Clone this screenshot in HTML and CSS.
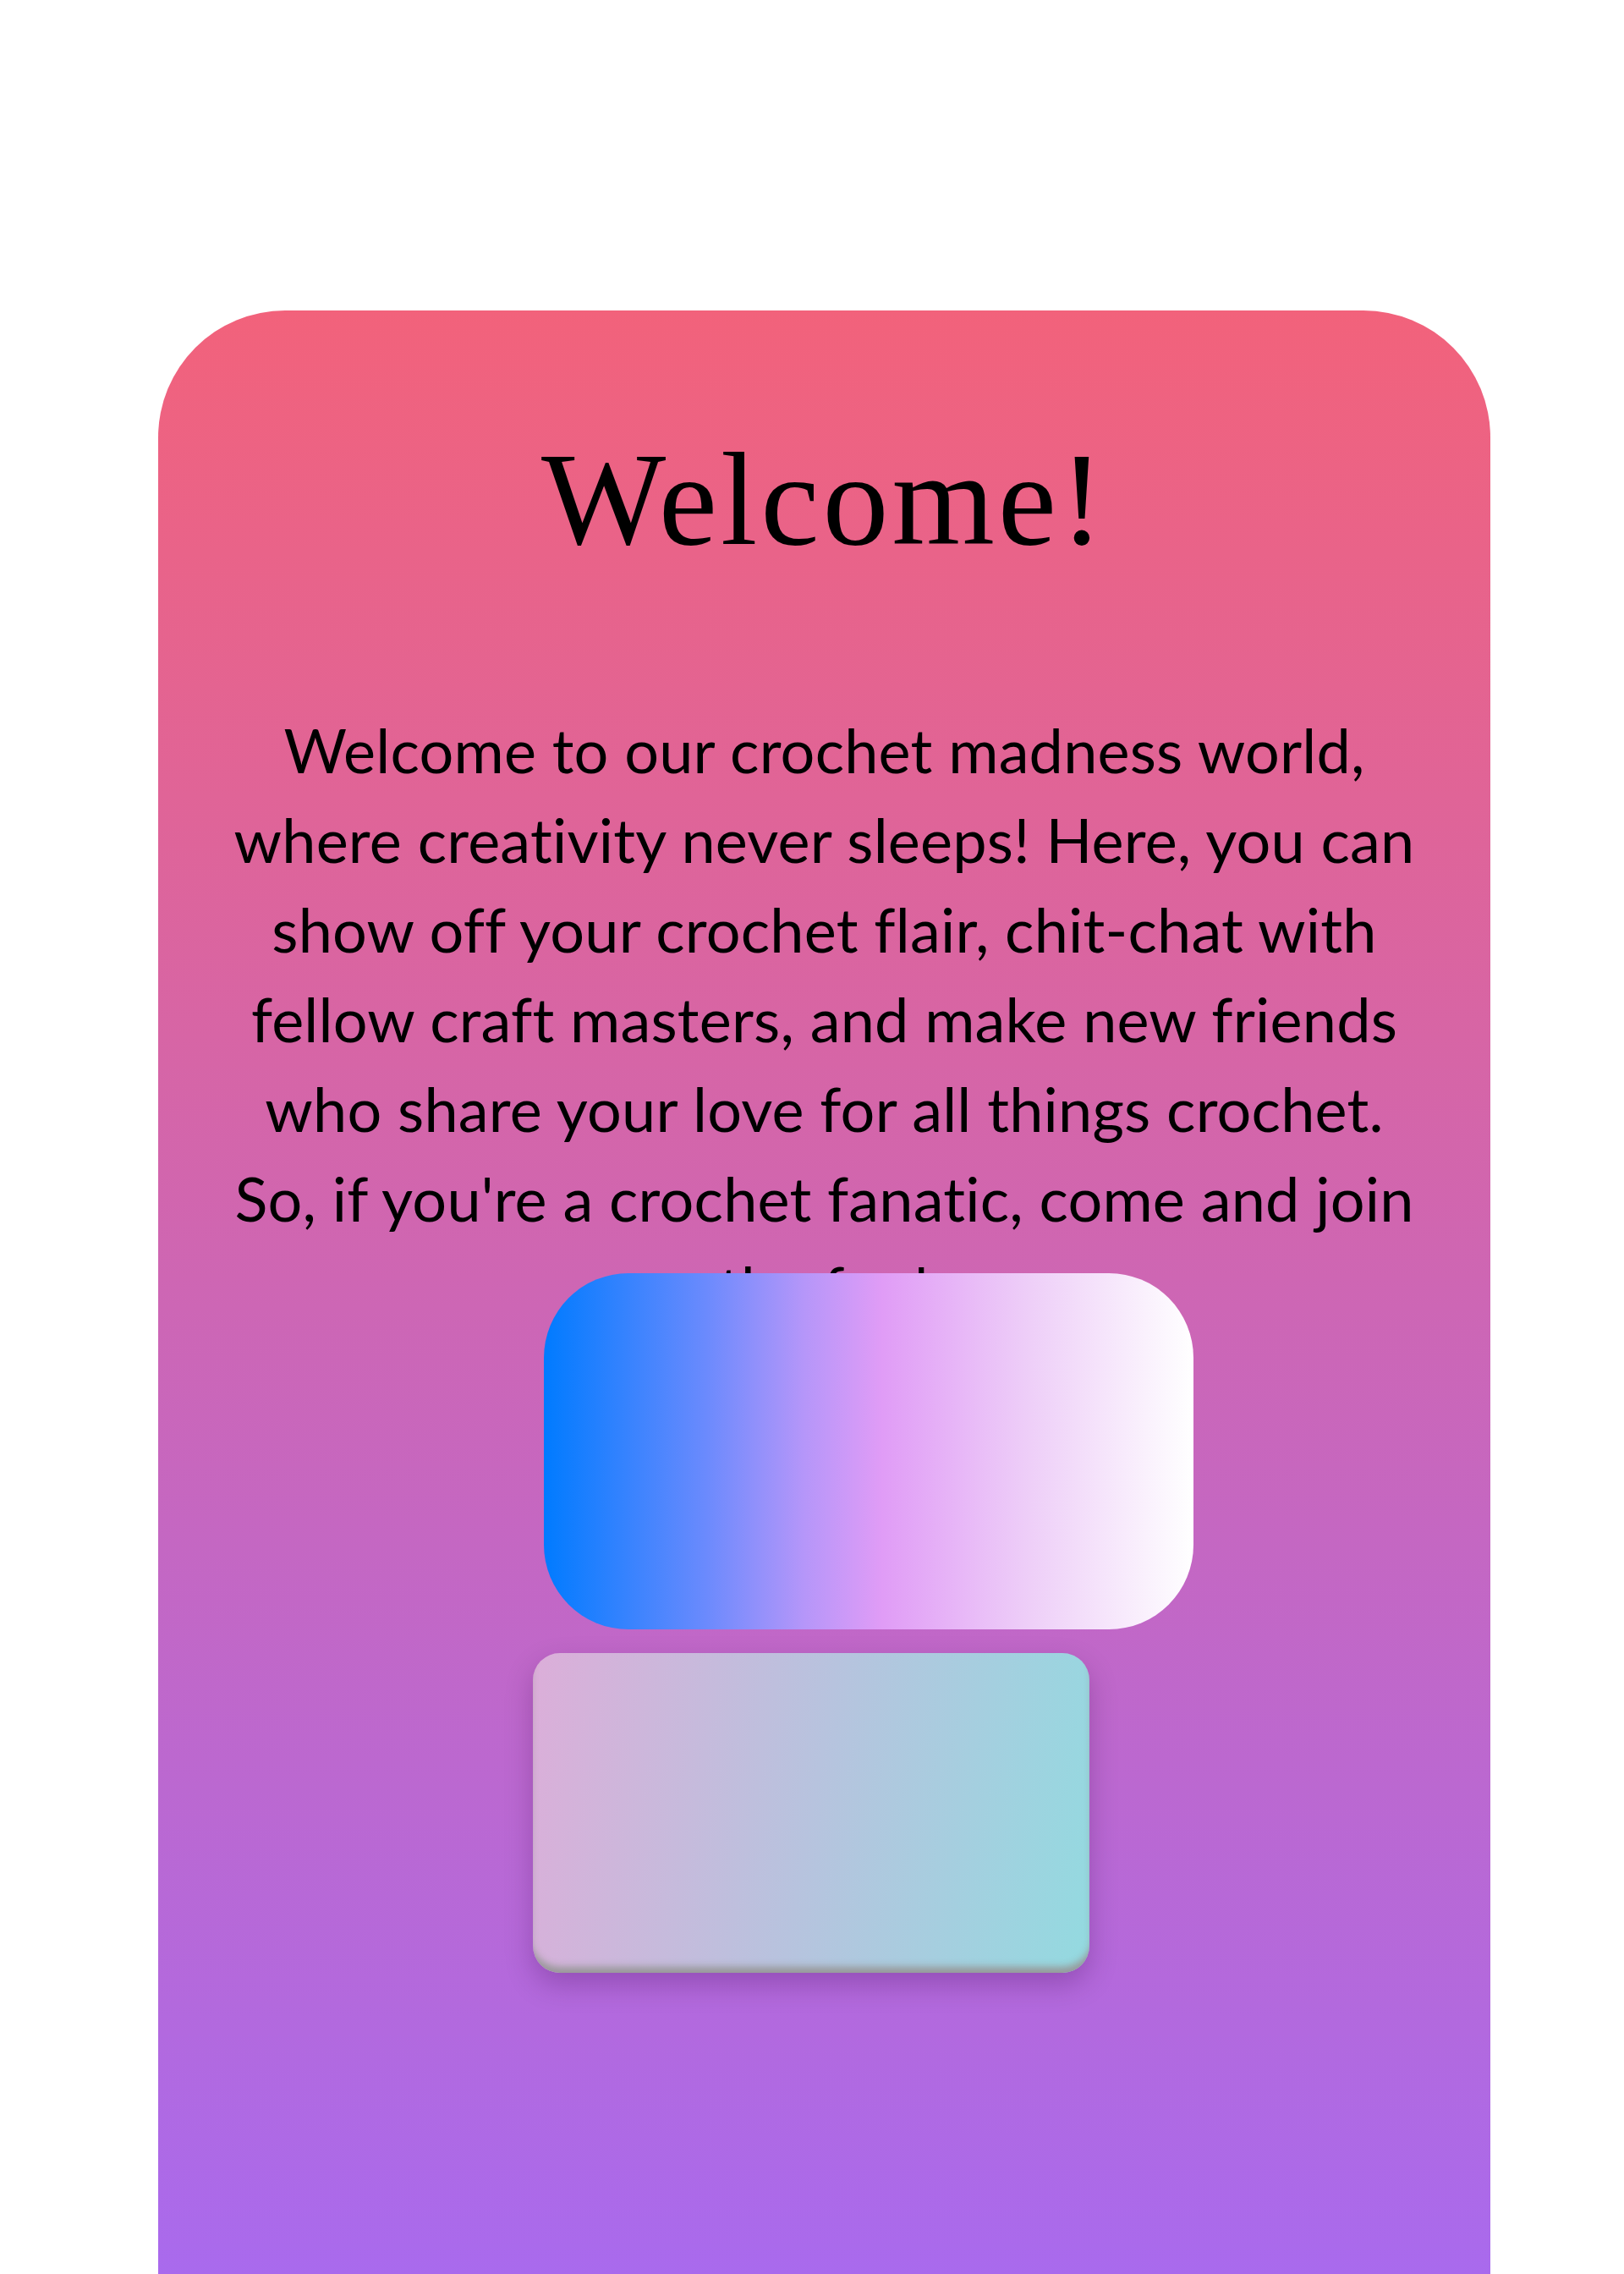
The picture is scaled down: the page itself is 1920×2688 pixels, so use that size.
FILE: index.html
```html
<!DOCTYPE html>
<html lang="en">
<head>
<meta charset="utf-8">
<title>Welcome!</title>
<link rel="stylesheet" href="styles.css">
</head>
<body>
<main class="card">
  <h1 class="title">Welcome!</h1>
  <p class="intro">Welcome to our crochet madness world, where creativity never sleeps! Here, you can show off your crochet flair, chit-chat with fellow craft masters, and make new friends who share your love for all things crochet. So, if you're a crochet fanatic, come and join the fun!</p>
  <div class="panel-gradient"></div>
  <div class="panel-soft"></div>
</main>
</body>
</html>
```
FILE: styles.css
```css
html, body {
  margin: 0;
  padding: 0;
  background: #ffffff;
}

.card {
  box-sizing: border-box;
  width: 1575px;
  min-height: 2321px;
  margin: 367px 0 0 187px;
  padding: 146px 80px 0 80px;
  border-radius: 150px 150px 0 0;
  background: linear-gradient(to bottom, #f2627b 0%, #a96aed 100%);
  display: flex;
  flex-direction: column;
}

.title {
  margin: 0;
  font-family: "Liberation Serif", "Times New Roman", serif;
  font-weight: normal;
  font-size: 156px;
  line-height: 1;
  letter-spacing: 4px;
  text-align: center;
  color: #000;
}

.intro {
  margin: 164px 0 0 0;
  height: 672px;
  font-family: Lato, "Noto Sans", sans-serif;
  font-size: 72px;
  letter-spacing: 0.2px;
  line-height: 106px;
  text-align: center;
  color: #000;
}

.panel-gradient {
  position: relative;
  width: 768px;
  height: 421px;
  margin-left: 376px;
  border-radius: 100px;
  background: linear-gradient(90deg, #007bff 0%, #6b8afd 25%, #b596f9 40%, #e09cf6 52%, #eecff8 75%, #ffffff 100%);
}

.panel-soft {
  position: relative;
  width: 658px;
  height: 378px;
  margin: 28px 0 0 363px;
  border-radius: 32px;
  background: linear-gradient(100deg, #dcaed9 0%, #b7c3de 50%, #93dae0 100%);
  box-shadow: inset 0 -10px 8px -3px rgba(150, 150, 150, 0.95), 0 14px 32px rgba(50, 0, 70, 0.25);
}
```
